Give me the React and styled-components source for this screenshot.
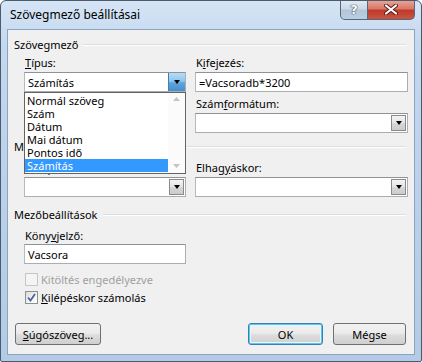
import styled, { createGlobalStyle, css } from "styled-components";

const GlobalStyle = createGlobalStyle`
  html, body {
    margin: 0;
    padding: 0;
    background: #ffffff;
  }
  body {
    font-family: "Noto Sans", "Open Sans", sans-serif;
    font-size: 11px;
    color: #000;
  }
`;

const Window = styled.div`
  box-sizing: border-box;
  width: 422px;
  height: 362px;
  display: flex;
  flex-direction: column;
  border: 1px solid #4b5b6c;
  border-radius: 6px 6px 2px 2px;
  background: linear-gradient(180deg, #d6e5f6 0%, #c4d8ef 12%, #b9d0ea 60%, #b3cbe6 100%);
  overflow: hidden;
`;

const TitleBar = styled.div`
  height: 28px;
  display: flex;
  align-items: flex-start;
  padding-left: 9px;
`;

const Title = styled.div`
  flex: 1;
  font-size: 12px;
  line-height: 15px;
  padding-top: 6px;
`;

const Caption = styled.div`
  display: flex;
  margin-right: 6px;
  margin-top: -1px;
`;

const CaptionButton = styled.div`
  box-sizing: border-box;
  height: 20px;
  display: flex;
  align-items: center;
  justify-content: center;
  border: 1px solid #56677a;
  border-top: none;
  ${(p) =>
    p.close
      ? css`
          width: 47px;
          border-left: none;
          border-radius: 0 0 5px 0;
          background: linear-gradient(180deg, #e9a99c 0%, #d8796a 45%, #c0392b 55%, #c8553f 100%);
        `
      : css`
          width: 28px;
          border-radius: 0 0 0 5px;
          background: linear-gradient(180deg, #e3ebf4 0%, #ccd9e7 45%, #b4c6d9 55%, #bccfe2 100%);
        `}
`;

const HelpGlyph = styled.span`
  font-family: "DejaVu Sans", sans-serif;
  font-weight: bold;
  font-size: 13px;
  color: #fff;
  text-shadow: 0 0 1px #3a4a5c, 0 0 1px #3a4a5c, 0 0 1px #3a4a5c;
`;

const Client = styled.div`
  flex: 1;
  margin: 0 6px 6px 6px;
  border: 1px solid #8ea4bd;
  background: #f0f0f0;
  padding: 7px 5px 0 6px;
  display: flex;
  flex-direction: column;
`;

const GroupHeader = styled.div`
  display: flex;
  align-items: center;
  height: 15px;
  line-height: 15px;
  margin-top: ${(p) => p.gap || 0}px;
  margin-right: 3px;
`;

const Rule = styled.div`
  flex: 1;
  margin-left: 5px;
  height: 0;
  border-top: 1px solid #d5dfe5;
  border-bottom: 1px solid #ffffff;
`;

const FieldGrid = styled.div`
  display: grid;
  grid-template-columns: 162px 213px;
  column-gap: 9px;
  margin-left: 10px;
  margin-top: ${(p) => p.gap || 0}px;
`;

const Field = styled.div`
  display: flex;
  flex-direction: column;
`;

const Label = styled.div`
  height: 15px;
  line-height: 15px;
  margin-bottom: ${(p) => (p.tight ? 1 : 2)}px;
  padding-left: 1px;
  color: ${(p) => (p.disabled ? "#a0a0a0" : "#000")};
`;

const Box = styled.div`
  position: relative;
  box-sizing: border-box;
  height: 20px;
  display: flex;
  align-items: center;
  background: #fff;
  border: 1px solid #abadb3;
  border-top-color: #8e9299;
  border-left-color: #b5b9c0;
  padding-left: 3px;
`;

const BoxText = styled.div`
  flex: 1;
  line-height: 15px;
`;

const ArrowButton = styled.div`
  box-sizing: border-box;
  width: 17px;
  height: 18px;
  display: flex;
  align-items: center;
  justify-content: center;
  border-left: 1px solid ${(p) => (p.hot ? "#3c7fb1" : "#a5a5a5")};
  ${(p) =>
    p.hot
      ? css`
          background: linear-gradient(180deg, #b6dcf6 0%, #8ec6ee 45%, #5ba5dc 55%, #4890cf 100%);
        `
      : css`
          border: 1px solid #8a8a8a;
          margin-right: 1px;
          height: 16px;
          width: 15px;
          background: linear-gradient(180deg, #f4f4f4 0%, #e6e6e6 45%, #d6d6d6 55%, #cbcbcb 100%);
        `}
`;

const Triangle = styled.div`
  width: 0;
  height: 0;
  border-left: 3.5px solid transparent;
  border-right: 3.5px solid transparent;
  border-top: 4px solid #000;
`;

const DropList = styled.div`
  position: absolute;
  left: -1px;
  top: 19px;
  z-index: 10;
  box-sizing: border-box;
  width: 162px;
  height: 82px;
  background: #fff;
  border: 1px solid #646464;
  display: flex;
`;

const Options = styled.div`
  flex: 1;
  padding: 1px 0 0 0;
`;

const Option = styled.div`
  height: 13px;
  line-height: 13px;
  padding-left: 2px;
  ${(p) =>
    p.selected &&
    css`
      background: #3399ff;
      color: #fff;
    `}
`;

const ScrollBar = styled.div`
  width: 17px;
  display: flex;
  flex-direction: column;
  justify-content: space-between;
  align-items: center;
  background: #fbfbfb;
  padding: 4px 0 5px 0;
`;

const Check = styled.div`
  box-sizing: border-box;
  width: 13px;
  height: 13px;
  display: flex;
  align-items: center;
  justify-content: center;
  border: 1px solid ${(p) => (p.disabled ? "#c6c6c6" : "#8e8f8f")};
  background: ${(p) =>
    p.disabled ? "#f4f4f4" : "linear-gradient(135deg, #dcdcdc 0%, #f4f4f4 60%, #ffffff 100%)"};
`;

const CheckRow = styled.div`
  display: flex;
  align-items: center;
  gap: 3px;
  height: 15px;
  margin-left: 11px;
  margin-top: ${(p) => p.gap || 0}px;
  color: ${(p) => (p.disabled ? "#a0a0a0" : "#000")};
`;

const ButtonRow = styled.div`
  display: flex;
  margin-top: 18px;
  margin-left: 1px;
  margin-right: 3px;
  gap: 10px;
`;

const Spacer = styled.div`
  flex: 1;
`;

const Button = styled.div`
  box-sizing: border-box;
  height: 22px;
  width: ${(p) => p.w}px;
  display: flex;
  align-items: center;
  justify-content: center;
  border-radius: 3px;
  border: 1px solid ${(p) => (p.primary ? "#3c7fb1" : "#707070")};
  background: linear-gradient(180deg, #f2f2f2 0%, #ebebeb 45%, #dddddd 55%, #cfcfcf 100%);
  ${(p) =>
    p.primary &&
    css`
      box-shadow: inset 0 0 0 1px #58c7ec, inset 0 0 0 2px #e9f7fc;
    `}
`;

function ComboArrow({ hot }) {
  return (
    <ArrowButton hot={hot}>
      <Triangle />
    </ArrowButton>
  );
}

function ScrollArrow({ down }) {
  return (
    <svg width="7" height="4" viewBox="0 0 7 4">
      <path d={down ? "M0 0 L7 0 L3.5 4 Z" : "M0 4 L7 4 L3.5 0 Z"} fill="#c4c4c4" />
    </svg>
  );
}

const typeOptions = ["Normál szöveg", "Szám", "Dátum", "Mai dátum", "Pontos idő", "Számítás"];

export default function App() {
  return (
    <>
      <GlobalStyle />
      <Window>
        <TitleBar>
          <Title>Szövegmező beállításai</Title>
          <Caption>
            <CaptionButton>
              <HelpGlyph>?</HelpGlyph>
            </CaptionButton>
            <CaptionButton close>
              <svg width="14" height="11" viewBox="0 0 14 11">
                <path
                  d="M2 1.5 L12 9.5 M12 1.5 L2 9.5"
                  stroke="#5a1a14"
                  strokeWidth="4"
                  strokeLinecap="round"
                />
                <path
                  d="M2 1.5 L12 9.5 M12 1.5 L2 9.5"
                  stroke="#ffffff"
                  strokeWidth="2.2"
                  strokeLinecap="round"
                />
              </svg>
            </CaptionButton>
          </Caption>
        </TitleBar>

        <Client>
          <GroupHeader>
            Szövegmező
            <Rule />
          </GroupHeader>

          <FieldGrid gap={3}>
            <Field>
              <Label>
                <u>T</u>ípus:
              </Label>
              <Box>
                <BoxText>Számítás</BoxText>
                <ComboArrow hot />
                <DropList>
                  <Options>
                    {typeOptions.map((o) => (
                      <Option key={o} selected={o === "Számítás"}>
                        {o}
                      </Option>
                    ))}
                  </Options>
                  <ScrollBar>
                    <ScrollArrow />
                    <ScrollArrow down />
                  </ScrollBar>
                </DropList>
              </Box>
            </Field>
            <Field>
              <Label>
                K<u>i</u>fejezés:
              </Label>
              <Box>
                <BoxText>=Vacsoradb*3200</BoxText>
              </Box>
            </Field>
          </FieldGrid>

          <FieldGrid gap={4}>
            <div />
            <Field>
              <Label>
                Szám<u>f</u>ormátum:
              </Label>
              <Box>
                <BoxText />
                <ComboArrow />
              </Box>
            </Field>
          </FieldGrid>

          <GroupHeader gap={6}>
            Makró futtatása
            <Rule />
          </GroupHeader>

          <FieldGrid gap={6}>
            <Field>
              <Label>
                <u>B</u>elépéskor:
              </Label>
              <Box>
                <BoxText />
                <ComboArrow />
              </Box>
            </Field>
            <Field>
              <Label>
                Elhag<u>y</u>áskor:
              </Label>
              <Box>
                <BoxText />
                <ComboArrow />
              </Box>
            </Field>
          </FieldGrid>

          <GroupHeader gap={10}>
            Mezőbeállítások
            <Rule />
          </GroupHeader>

          <FieldGrid gap={6}>
            <Field>
              <Label tight>
                Köny<u>v</u>jelző:
              </Label>
              <Box>
                <BoxText>Vacsora</BoxText>
              </Box>
            </Field>
          </FieldGrid>

          <CheckRow gap={8} disabled>
            <Check disabled />
            Kitöltés engedélyezve
          </CheckRow>
          <CheckRow gap={3}>
            <Check>
              <svg width="9" height="9" viewBox="0 0 9 9">
                <path d="M1 4.5 L3.5 7.5 L8 1" fill="none" stroke="#4c61a0" strokeWidth="1.8" />
              </svg>
            </Check>
            <span>
              <u>K</u>ilépéskor számolás
            </span>
          </CheckRow>

          <ButtonRow>
            <Button w={86}>
              <span>
                <u>S</u>úgószöveg...
              </span>
            </Button>
            <Spacer />
            <Button w={75} primary>
              OK
            </Button>
            <Button w={73}>Mégse</Button>
          </ButtonRow>
        </Client>
      </Window>
    </>
  );
}
